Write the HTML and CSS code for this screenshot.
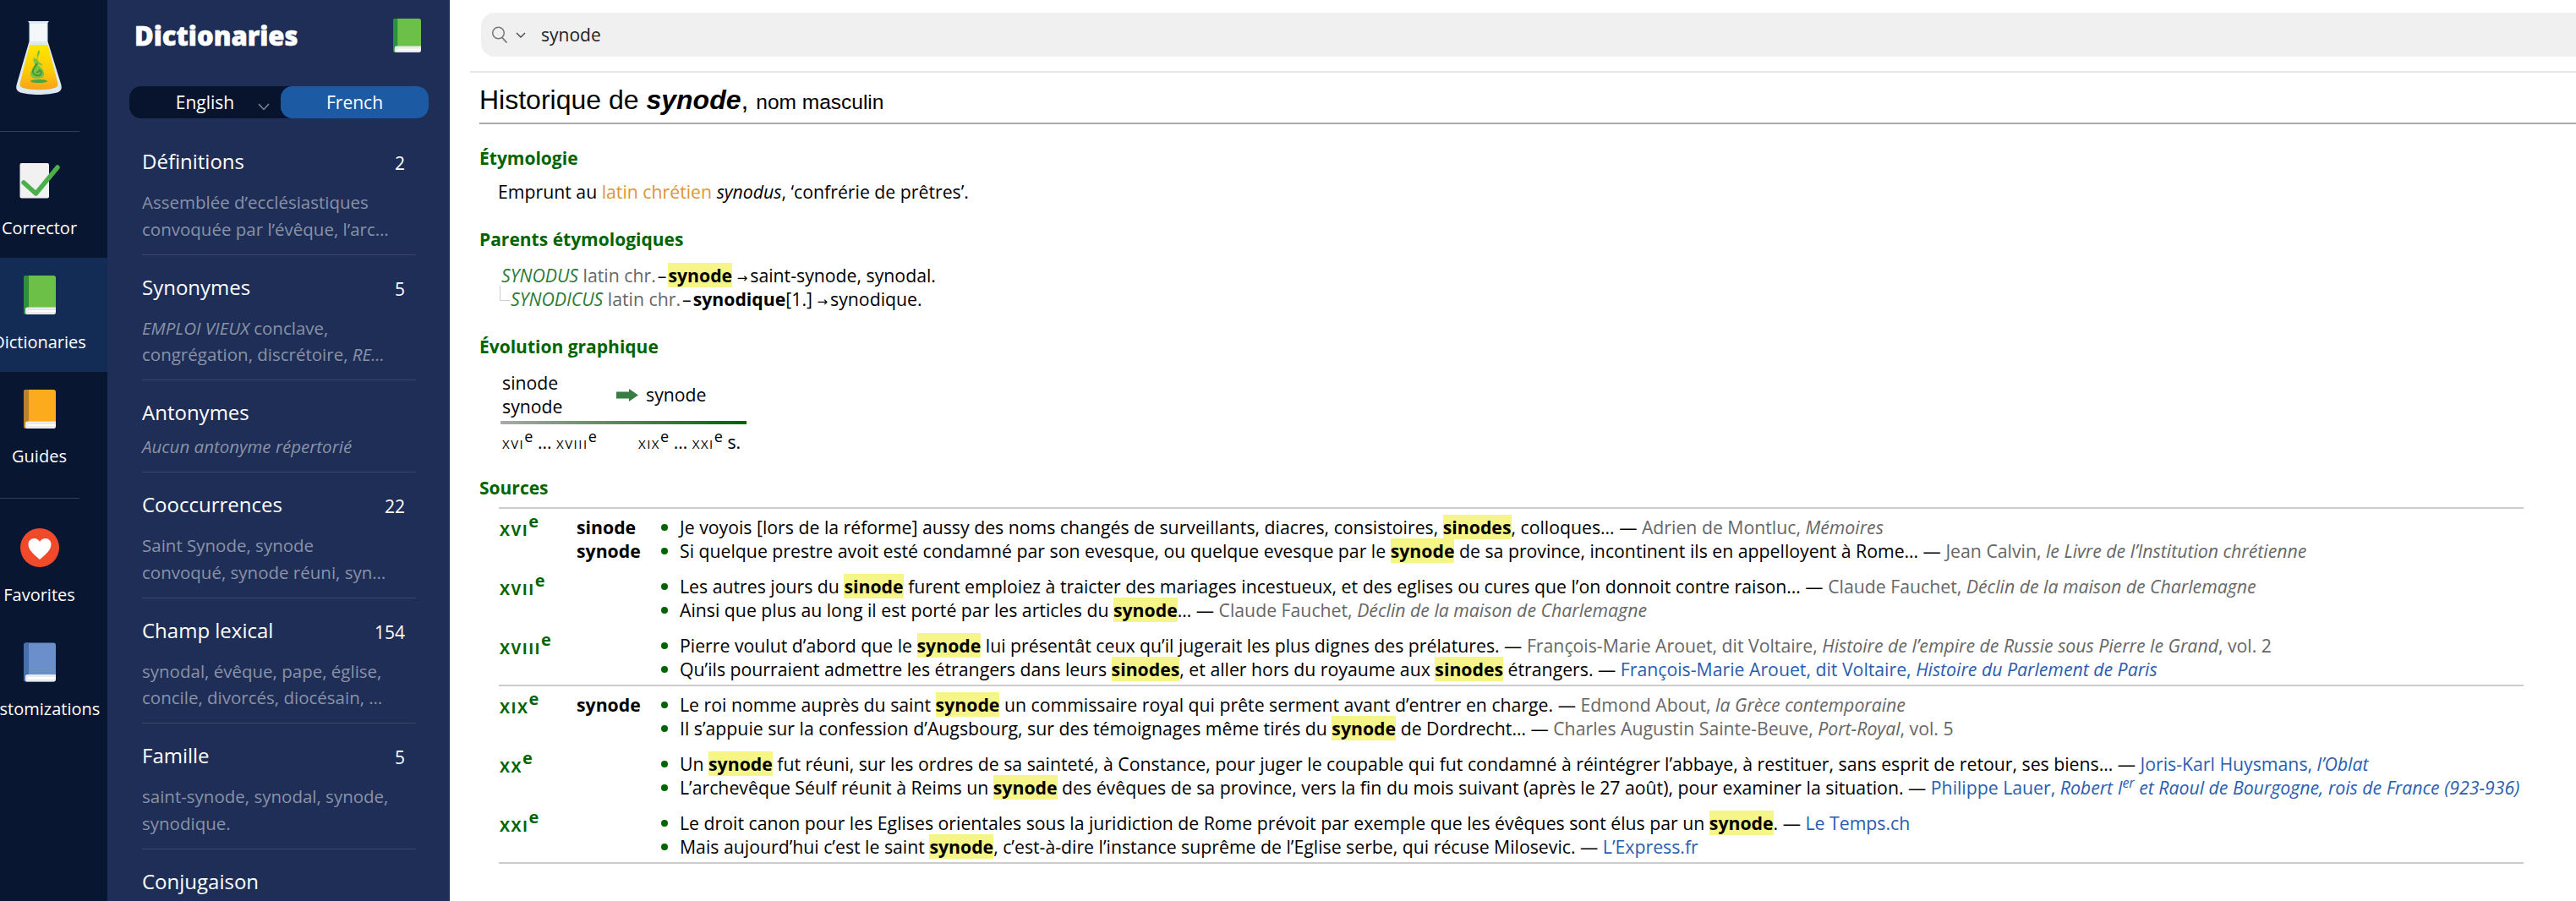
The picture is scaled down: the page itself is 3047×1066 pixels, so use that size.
FILE: index.html
```html
<!DOCTYPE html>
<html lang="fr">
<head>
    <meta charset="UTF-8">
    <title>Historique de synode</title>
    <link rel="stylesheet" href="styles.css">
</head>
<body>
    <svg class="defs" xmlns="http://www.w3.org/2000/svg">
        <symbol id="book" viewBox="0 0 38 46">
            <rect width="38" height="46" rx="3" fill="var(--cover)"></rect>
            <path d="M3 0h3v46H3a3 3 0 0 1-3-3V3a3 3 0 0 1 3-3z" fill="var(--spine)"></path>
            <path d="M2 40a2.500 2.500 0 0 1 2.500-2.500H38v3H5V42h33v1a3 3 0 0 1-3 3H4a2 2 0 0 1-2-2z" fill="#e9ecee"></path>
            <rect x="5" y="40.500" width="33" height="2.500" fill="#fff"></rect>
        </symbol>
    </svg>

    <nav class="rail">
        <div class="rail-logo">
            <svg width="54" height="87" viewBox="0 0 54 87">
                <defs>
                    <linearGradient id="liquid" x1="0" y1="0" x2="0" y2="1">
                        <stop offset="0" stop-color="#ffe600"></stop>
                        <stop offset="0.6" stop-color="#fdc908"></stop>
                        <stop offset="1" stop-color="#f9a11b"></stop>
                    </linearGradient>
                </defs>
                <path d="M14 0h25l-1.500 2v22L53 74c1.500 5 1 8-3 10-12 4-35 4-46 0-4-2-4.500-5-3-10L15.500 24V2z" fill="#dde9f2"></path>
                <path d="M17 3h19v21H17z" fill="#f3f7fa"></path>
                <path d="M16 28h21.500L49 72c1 4 0 6-3 7-11 3-27 3-38 0-3-1-4-3-3-7z" fill="url(#liquid)"></path>
                <path d="M27 34c4 5-4 8-1 13 2 3 6 3 5 7-1-2-3-3-5-2 4 3 8 7 7 12-1 3-4 4-8 4-5 0-8-2-8-6s4-6 5-9c1-4-3-5-1-10 2 2 3 2 4 1-1-4 0-7 2-10z" fill="#7cc144"></path>
                <path d="M25 50c-3 4-6 7-5 11 1 3 5 4 8 3 3-2 2-5 0-6-1 2-3 3-4 2" fill="none" stroke="#3f9b36" stroke-width="2"></path>
                <ellipse cx="27" cy="71" rx="10" ry="2" fill="#4aa63c"></ellipse>
            </svg>
        </div>
        <hr class="rail-line">
        <a class="rail-item">
            <span class="rail-icon">
                <svg width="48" height="42" viewBox="0 0 48 42">
                    <rect x="0.500" width="34.500" height="41.500" rx="2" fill="#f1f1f1"></rect>
                    <path d="M5 23l14.500 13L45 5" fill="none" stroke="#4cb04a" stroke-width="5.500" stroke-linecap="round" stroke-linejoin="round"></path>
                </svg>
            </span>
            <span class="rail-label">Corrector</span>
        </a>
        <a class="rail-item active">
            <span class="rail-icon"><svg class="book-green" width="38" height="46"><use href="#book"></use></svg></span>
            <span class="rail-label">Dictionaries</span>
        </a>
        <a class="rail-item">
            <span class="rail-icon"><svg class="book-orange" width="38" height="46"><use href="#book"></use></svg></span>
            <span class="rail-label">Guides</span>
        </a>
        <hr class="rail-line second">
        <a class="rail-item">
            <span class="rail-icon">
                <svg width="46" height="48" viewBox="0 0 46 48">
                    <circle cx="23" cy="24" r="23" fill="#f04a2a"></circle>
                    <path d="M23 38C15 31 9.500 26.500 9.500 20c0-4 3-7 6.800-7 2.800 0 5.300 1.500 6.700 4 1.400-2.500 3.900-4 6.700-4 3.800 0 6.800 3 6.800 7 0 6.500-5.500 11-13.500 18z" fill="#fff"></path>
                </svg>
            </span>
            <span class="rail-label">Favorites</span>
        </a>
        <a class="rail-item">
            <span class="rail-icon"><svg class="book-blue" width="38" height="47"><use href="#book"></use></svg></span>
            <span class="rail-label">Customizations</span>
        </a>
    </nav>

    <aside class="sidebar">
        <header class="side-head">
            <h1>Dictionaries</h1>
            <svg class="book-green" width="33" height="40"><use href="#book"></use></svg>
        </header>
        <div class="lang-toggle">
            <div class="lang-off">
                <span>English</span>
                <svg width="14" height="9" viewBox="0 0 14 9"><path d="M1 1l6 6.500L13 1" fill="none" stroke="#7f8798" stroke-width="1.500"></path></svg>
            </div>
            <div class="lang-on">French</div>
        </div>
        <ul class="side-list">
            <li class="side-row">
                <div class="row-top"><span class="row-name">Définitions</span><span class="row-count">2</span></div>
                <p class="row-desc">Assemblée d’ecclésiastiques<br>convoquée par l’évêque, l’arc…</p>
            </li>
            <li class="side-row">
                <div class="row-top"><span class="row-name">Synonymes</span><span class="row-count">5</span></div>
                <p class="row-desc"><i>EMPLOI VIEUX</i> conclave,<br>congrégation, discrétoire, <i>RE…</i></p>
            </li>
            <li class="side-row single">
                <div class="row-top"><span class="row-name">Antonymes</span></div>
                <p class="row-desc"><i>Aucun antonyme répertorié</i></p>
            </li>
            <li class="side-row">
                <div class="row-top"><span class="row-name">Cooccurrences</span><span class="row-count">22</span></div>
                <p class="row-desc">Saint Synode, synode<br>convoqué, synode réuni, syn…</p>
            </li>
            <li class="side-row">
                <div class="row-top"><span class="row-name">Champ lexical</span><span class="row-count">154</span></div>
                <p class="row-desc">synodal, évêque, pape, église,<br>concile, divorcés, diocésain, …</p>
            </li>
            <li class="side-row">
                <div class="row-top"><span class="row-name">Famille</span><span class="row-count">5</span></div>
                <p class="row-desc">saint-synode, synodal, synode,<br>synodique.</p>
            </li>
            <li class="side-row">
                <div class="row-top"><span class="row-name">Conjugaison</span></div>
            </li>
        </ul>
    </aside>

    <main class="main">
        <div class="search-wrap">
            <div class="search-box">
                <svg width="20" height="20" viewBox="0 0 20 20"><circle cx="8.500" cy="8" r="6.800" fill="none" stroke="#777" stroke-width="1.500"></circle><path d="M13 13.500l5.500 6" stroke="#777" stroke-width="1.800"></path></svg>
                <svg class="search-caret" width="12" height="7" viewBox="0 0 12 7"><path d="M1 1l5 5 5-5" fill="none" stroke="#444" stroke-width="1.300"></path></svg>
                <span class="search-text">synode</span>
            </div>
        </div>

        <div class="content">
            <h2 class="page-title">Historique de <b><i>synode</i></b>, <small>nom masculin</small></h2>

            <h3 class="sec first">Étymologie</h3>
            <p class="etym">Emprunt au <span class="orange">latin chrétien</span> <i>synodus</i>, ‘confrérie de prêtres’.</p>

            <h3 class="sec">Parents étymologiques</h3>
            <div class="tree">
                <div class="tree-line"><i class="root">SYNODUS</i> <span class="lang">latin chr.</span><span class="dash">–</span><b class="hl">synode</b> <span class="arrow">→</span>saint-synode, synodal.</div>
                <div class="tree-line child"><i class="root">SYNODICUS</i> <span class="lang">latin chr.</span><span class="dash">–</span><b>synodique</b>[1.] <span class="arrow">→</span>synodique.</div>
            </div>

            <h3 class="sec">Évolution graphique</h3>
            <div class="evol">
                <div class="evol-top">
                    <div class="evol-left">sinode<br>synode</div>
                    <svg width="26" height="15" viewBox="0 0 26 15"><path d="M0 3.500h15V0l11 7.500L15 15v-3.500H0z" fill="#3a7d44"></path></svg>
                    <div class="evol-right">synode</div>
                </div>
                <div class="evol-bar"></div>
                <div class="evol-dates">
                    <div class="evol-left"><span class="sc">xvi</span><sup>e</sup> … <span class="sc">xviii</span><sup>e</sup></div>
                    <div class="evol-right"><span class="sc">xix</span><sup>e</sup> … <span class="sc">xxi</span><sup>e</sup> s.</div>
                </div>
            </div>

            <h3 class="sec sources">Sources</h3>
            <div class="src-table">
                <section class="src-group">
                    <div class="src-row">
                        <div class="era">xvi<sup>e</sup></div>
                        <div class="forms">sinode<br>synode</div>
                        <ul class="quotes">
                            <li>Je voyois [lors de la réforme] aussy des noms changés de surveillants, diacres, consistoires, <b class="hl">sinodes</b>, colloques… — <span class="cite">Adrien de Montluc, <i>Mémoires</i></span></li>
                            <li>Si quelque prestre avoit esté condamné par son evesque, ou quelque evesque par le <b class="hl">synode</b> de sa province, incontinent ils en appelloyent à Rome… — <span class="cite">Jean Calvin, <i>le Livre de l’Institution chrétienne</i></span></li>
                        </ul>
                    </div>
                    <div class="src-row">
                        <div class="era">xvii<sup>e</sup></div>
                        <div class="forms"></div>
                        <ul class="quotes">
                            <li>Les autres jours du <b class="hl">sinode</b> furent emploiez à traicter des mariages incestueux, et des eglises ou cures que l’on donnoit contre raison… — <span class="cite">Claude Fauchet, <i>Déclin de la maison de Charlemagne</i></span></li>
                            <li>Ainsi que plus au long il est porté par les articles du <b class="hl">synode</b>… — <span class="cite">Claude Fauchet, <i>Déclin de la maison de Charlemagne</i></span></li>
                        </ul>
                    </div>
                    <div class="src-row">
                        <div class="era">xviii<sup>e</sup></div>
                        <div class="forms"></div>
                        <ul class="quotes">
                            <li>Pierre voulut d’abord que le <b class="hl">synode</b> lui présentât ceux qu’il jugerait les plus dignes des prélatures. — <span class="cite">François-Marie Arouet, dit Voltaire, <i>Histoire de l’empire de Russie sous Pierre le Grand</i>, vol. 2</span></li>
                            <li>Qu’ils pourraient admettre les étrangers dans leurs <b class="hl">sinodes</b>, et aller hors du royaume aux <b class="hl">sinodes</b> étrangers. — <a class="cite-link">François-Marie Arouet, dit Voltaire, <i>Histoire du Parlement de Paris</i></a></li>
                        </ul>
                    </div>
                </section>
                <section class="src-group">
                    <div class="src-row">
                        <div class="era">xix<sup>e</sup></div>
                        <div class="forms">synode</div>
                        <ul class="quotes">
                            <li>Le roi nomme auprès du saint <b class="hl">synode</b> un commissaire royal qui prête serment avant d’entrer en charge. — <span class="cite">Edmond About, <i>la Grèce contemporaine</i></span></li>
                            <li>Il s’appuie sur la confession d’Augsbourg, sur des témoignages même tirés du <b class="hl">synode</b> de Dordrecht… — <span class="cite">Charles Augustin Sainte-Beuve, <i>Port-Royal</i>, vol. 5</span></li>
                        </ul>
                    </div>
                    <div class="src-row">
                        <div class="era">xx<sup>e</sup></div>
                        <div class="forms"></div>
                        <ul class="quotes">
                            <li>Un <b class="hl">synode</b> fut réuni, sur les ordres de sa sainteté, à Constance, pour juger le coupable qui fut condamné à réintégrer l’abbaye, à restituer, sans esprit de retour, ses biens… — <a class="cite-link">Joris-Karl Huysmans, <i>l’Oblat</i></a></li>
                            <li>L’archevêque Séulf réunit à Reims un <b class="hl">synode</b> des évêques de sa province, vers la fin du mois suivant (après le 27 août), pour examiner la situation. — <a class="cite-link">Philippe Lauer, <i>Robert I<sup>er</sup> et Raoul de Bourgogne, rois de France (923-936)</i></a></li>
                        </ul>
                    </div>
                    <div class="src-row">
                        <div class="era">xxi<sup>e</sup></div>
                        <div class="forms"></div>
                        <ul class="quotes">
                            <li>Le droit canon pour les Eglises orientales sous la juridiction de Rome prévoit par exemple que les évêques sont élus par un <b class="hl">synode</b>. — <a class="cite-link">Le Temps.ch</a></li>
                            <li>Mais aujourd’hui c’est le saint <b class="hl">synode</b>, c’est-à-dire l’instance suprême de l’Eglise serbe, qui récuse Milosevic. — <a class="cite-link">L’Express.fr</a></li>
                        </ul>
                    </div>
                </section>
            </div>
        </div>
    </main>
</body>
</html>
```

FILE: styles.css
```css
/* Antidote dictionary window */
* {
    box-sizing: border-box;
}

html, body {
    height: 100%;
}

body {
    margin: 0;
    display: flex;
    height: 1066px;
    overflow: hidden;
    font-family: "Open Sans", "Noto Sans", sans-serif;
    background: #fff;
    color: #000;
}

.defs {
    position: absolute;
    width: 0;
    height: 0;
}

.book-green {
    --cover: #6cbf47;
    --spine: #2f8f40;
}

.book-orange {
    --cover: #fcab1d;
    --spine: #b9822c;
}

.book-blue {
    --cover: #6b8fca;
    --spine: #4570ad;
}

/* left rail */
.rail {
    flex: 0 0 127px;
    background: #091631;
    overflow: hidden;
    color: #fff;
}

.rail-logo {
    height: 155px;
    padding: 25px 0 0 19px;
}

.rail-logo svg,
.rail-icon svg {
    display: block;
}

.rail-line {
    width: 94px;
    height: 1px;
    margin: 0 0 14px;
    border: 0;
    background: #303d5c;
}

.rail-line.second {
    margin-top: 14px;
}

.rail-item {
    display: flex;
    flex-direction: column;
    align-items: center;
    height: 135px;
    padding: 20px 34px 0 0;
}

.rail-item.active {
    background: #132c56;
}

.rail-icon {
    display: flex;
    align-items: center;
    height: 48px;
    margin-bottom: 20px;
}

.rail-label {
    font-size: 20px;
    line-height: 24px;
    white-space: nowrap;
}

/* dictionary list */
.sidebar {
    flex: 0 0 405px;
    background: #1e2e56;
    color: #fff;
    overflow: hidden;
}

.side-head {
    display: flex;
    justify-content: space-between;
    align-items: center;
    height: 40px;
    margin: 22px 34px 0 32px;
}

.side-head h1 {
    margin: 0;
    font-size: 31px;
    font-weight: 800;
    line-height: 40px;
    -webkit-text-stroke: 0.6px #fff;
}

.lang-toggle {
    display: flex;
    height: 38px;
    margin: 40px 25px 0 26px;
    border-radius: 14px;
    background: #08132e;
    font-size: 21px;
}

.lang-off {
    position: relative;
    flex: 0 0 179px;
    text-align: center;
    line-height: 38px;
    padding-right: 0;
}

.lang-off svg {
    position: absolute;
    right: 13px;
    top: 20px;
}

.lang-on {
    flex: 1;
    border-radius: 14px;
    background: #1c5ba4;
    text-align: center;
    line-height: 38px;
}

.side-list {
    list-style: none;
    margin: 13px 40px 0 41px;
    padding: 0;
}

.side-row {
    padding: 23px 0 13.5px;
    border-bottom: 1px solid #3b4869;
}

.side-row:last-child {
    border-bottom: 0;
}

.row-top {
    display: flex;
    justify-content: space-between;
    padding-right: 13px;
    height: 30px;
}

.row-name {
    font-size: 24px;
    line-height: 30px;
}

.row-count {
    font-size: 21px;
    line-height: 35px;
}

.row-desc {
    margin: 18px 0 0;
    font-size: 20.5px;
    line-height: 31.5px;
    color: #8a92a8;
    white-space: nowrap;
}

.single .row-desc {
    margin-top: 10px;
}

/* main pane */
.main {
    flex: 1;
    min-width: 0;
    overflow: hidden;
}

.search-wrap {
    height: 86px;
    margin-left: 24px;
    padding: 15px 0 0 13px;
    border-bottom: 2px solid #e6e6e6;
}

.search-box {
    display: flex;
    align-items: center;
    height: 52px;
    padding-left: 12px;
    border-radius: 16px 0 0 16px;
    background: #f0f0f0;
}

.search-caret {
    margin: 0 0 0 9px;
}

.search-text {
    margin-left: 18px;
    font-size: 21px;
    color: #222;
}

.content {
    padding-left: 35px;
    font-size: 21.25px;
    line-height: 28px;
}

.page-title {
    height: 61px;
    margin: 0;
    border-bottom: 2px solid #aaa;
    font-family: "Liberation Sans", Arial, sans-serif;
    font-size: 32px;
    font-weight: 400;
    line-height: 64px;
}

.page-title small {
    font-size: 24.5px;
}

.sec {
    margin: 28px 0 0;
    font-size: 21px;
    font-weight: 700;
    line-height: 28px;
    color: #006400;
}

.sec.first {
    margin-top: 26px;
}

.sec.sources {
    margin-top: 26px;
}

.etym {
    margin: 12px 0 0 22px;
}

.orange {
    color: #e09436;
}

.tree {
    position: relative;
    margin: 15px 0 0 26px;
}

.tree-line.child {
    padding-left: 11px;
}

.tree-line.child::before {
    content: "";
    position: absolute;
    left: -2px;
    top: 26px;
    width: 11px;
    height: 17px;
    border-left: 1px solid #ccc;
    border-bottom: 1px solid #ccc;
}

.root {
    color: #2b7a34;
}

.lang {
    color: #666;
}

.dash {
    margin: 0 2px;
}

.arrow {
    font-family: "DejaVu Sans", sans-serif;
    font-size: 15px;
    line-height: 0;
    margin-right: 3px;
}

.hl {
    background: #f6f588;
}

.evol {
    width: 291px;
    margin: 15px 0 0 25px;
}

.evol-top {
    display: flex;
    align-items: center;
    height: 56px;
    gap: 9px;
}

.evol-left {
    flex: 0 0 128px;
    padding-left: 2px;
}

.evol-right {
    flex: 1;
}

.evol-bar {
    height: 4px;
    margin-top: 3px;
    background: linear-gradient(to right, #aaa, #006400);
}

.evol-dates {
    display: flex;
    gap: 35px;
    margin-top: 7px;
    white-space: nowrap;
}

.evol-dates sup {
    font-size: 18px;
}

.sc {
    font-variant: small-caps;
    letter-spacing: 1.5px;
}

sup {
    font-size: 0.75em;
    font-variant: normal;
    line-height: 0;
}

.src-table {
    margin: 9px 62px 0 23px;
    border-top: 2px solid #ccc;
}

.src-group {
    display: flex;
    flex-direction: column;
    gap: 14px;
    padding: 8px 0 4px;
    border-bottom: 2px solid #ccc;
}

.src-row {
    display: grid;
    grid-template-columns: 91px 100px 1fr;
    padding-left: 1px;
    white-space: nowrap;
}

.era {
    font-size: 26px;
    font-weight: 700;
    font-variant: small-caps;
    letter-spacing: 1.5px;
    line-height: 28px;
    color: #006400;
}

.era sup {
    font-size: 20px;
    letter-spacing: 0;
}

.forms {
    font-weight: 700;
}

.quotes {
    list-style: none;
    margin: 0;
    padding: 0 0 0 22px;
}

.quotes li {
    position: relative;
}

.quotes li::before {
    content: "";
    position: absolute;
    left: -22px;
    top: 10px;
    width: 8px;
    height: 8px;
    border-radius: 50%;
    background: #006400;
}

.cite {
    color: #666;
}

.cite-link {
    color: #2a5db0;
}
```
